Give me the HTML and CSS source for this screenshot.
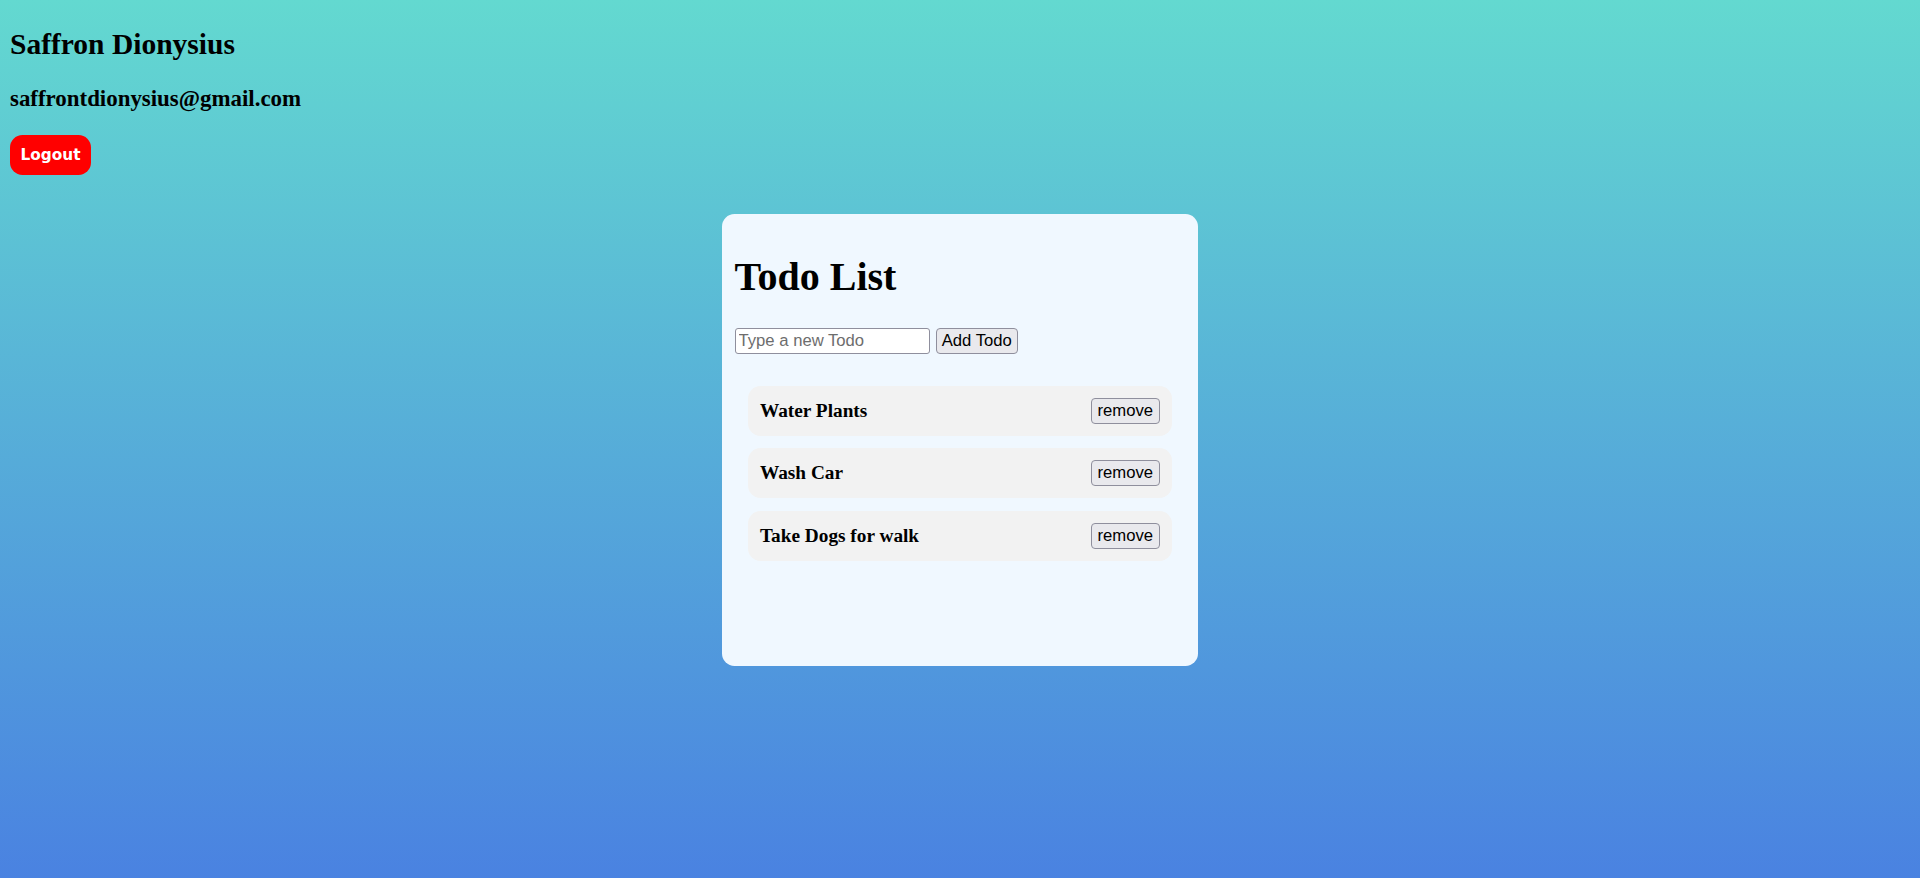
FILE: index.html
```html
<!DOCTYPE html>
<html lang="en">
<head>
<meta charset="utf-8">
<title>Todo List</title>
<link rel="stylesheet" href="styles.css">
</head>
<body>
  <header class="user">
    <h2 class="user-name">Saffron Dionysius</h2>
    <h3 class="user-email">saffrontdionysius@gmail.com</h3>
    <button class="logout">Logout</button>
  </header>
  <main class="card">
    <h1 class="title">Todo List</h1>
    <form class="add-row">
      <input class="add-input" type="text" placeholder="Type a new Todo">
      <button class="btn add-btn" type="button">Add Todo</button>
    </form>
    <ul class="todos">
      <li class="todo"><span class="todo-text">Water Plants</span><button class="btn remove-btn">remove</button></li>
      <li class="todo"><span class="todo-text">Wash Car</span><button class="btn remove-btn">remove</button></li>
      <li class="todo"><span class="todo-text">Take Dogs for walk</span><button class="btn remove-btn">remove</button></li>
    </ul>
  </main>
</body>
</html>
```
FILE: styles.css
```css
html {
  min-height: 100%;
  background: linear-gradient(to bottom, #63d9d0 0%, #4a82e1 100%);
}
body {
  margin: 10px;
  font-family: "Liberation Serif", "Times New Roman", serif;
  color: #000;
}
.user-name {
  font-size: 29.5px;
  font-weight: bold;
  margin: 17.7px 0 25px;
}
.user-email {
  font-size: 22.9px;
  font-weight: bold;
  margin: 23.4px 0;
}
.logout {
  display: block;
  background: #ff0000;
  color: #fff;
  border: none;
  border-radius: 12.5px;
  padding: 10px 10px;
  font-family: "DejaVu Sans", Verdana, sans-serif;
  font-weight: bold;
  font-size: 15.3px;
  line-height: 20px;
  height: 39.5px;
  width: 81px;
  cursor: pointer;
}
.card {
  box-sizing: border-box;
  width: 476px;
  min-height: 452px;
  margin: 39px auto 0;
  padding: 12.5px;
  background: #f0f8ff;
  border-radius: 12.5px;
}
.title {
  font-size: 40px;
  font-weight: bold;
  margin: 26.8px 0 28.3px;
}
.add-row {
  display: flex;
  gap: 6px;
  margin: 0;
}
.add-input {
  box-sizing: border-box;
  width: 195px;
  height: 25.5px;
  border: 1px solid #8f8f9d;
  border-radius: 3px;
  padding: 0 3px;
  background: #fff;
  font-family: "Liberation Sans", Arial, sans-serif;
  font-size: 16.67px;
  color: #000;
}
.add-input::placeholder {
  color: #6d6d6d;
}
.btn {
  box-sizing: border-box;
  height: 26px;
  border: 1px solid #8f8f9d;
  border-radius: 4px;
  background: #e9e9ed;
  font-family: "Liberation Sans", Arial, sans-serif;
  font-size: 16.67px;
  color: #000;
  padding: 0 5px;
  line-height: 22px;
}
.add-btn {
  width: 82.5px;
}
.remove-btn {
  width: 68.5px;
}
.todos {
  list-style: none;
  margin: 31.5px 13.5px 0 13px;
  padding: 0;
  display: flex;
  flex-direction: column;
  gap: 12.7px;
}
.todo {
  box-sizing: border-box;
  height: 50px;
  padding: 0 12.5px;
  background: #f2f2f2;
  border-radius: 12.5px;
  display: flex;
  align-items: center;
  justify-content: space-between;
}
.todo-text {
  font-size: 19.3px;
  font-weight: bold;
}
```
